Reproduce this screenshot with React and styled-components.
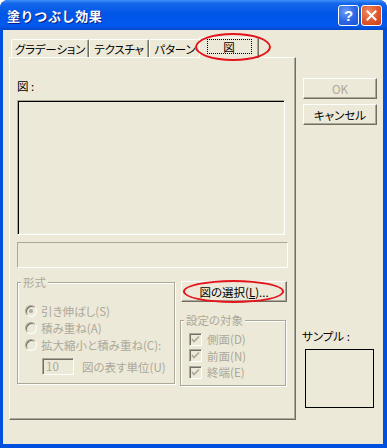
import styled, { createGlobalStyle } from "styled-components";

const GlobalStyle = createGlobalStyle`
  html, body {
    margin: 0;
    padding: 0;
    background: #ffffff;
  }
  body {
    font-family: "Noto Sans CJK JP", "Noto Sans", sans-serif;
    font-size: 11.5px;
    font-feature-settings: "palt";
  }
`;

const Window = styled.div`
  width: 387px;
  height: 448px;
  display: flex;
  flex-direction: column;
  background: #0050e0;
  border-radius: 8px 8px 0 0;
  overflow: hidden;
`;

const TitleBar = styled.div`
  height: 30px;
  flex: none;
  display: flex;
  align-items: center;
  padding: 0 5px 0 7px;
  box-sizing: border-box;
  background: linear-gradient(#3f8ff7 0%, #1466ea 12%, #0056e6 45%, #0058ee 85%, #0449cc 100%);
`;

const Title = styled.div`
  flex: 1;
  color: #ffffff;
  font-weight: bold;
  font-size: 13px;
  letter-spacing: 0.6px;
  font-feature-settings: normal;
  text-shadow: 1px 1px 0 #0a1e8a;
`;

const CaptionButton = styled.div`
  width: 21px;
  height: 21px;
  box-sizing: border-box;
  margin-left: 2px;
  border: 1px solid #ffffff;
  border-radius: 3px;
  display: flex;
  align-items: center;
  justify-content: center;
  color: #ffffff;
  font-family: "Liberation Sans", sans-serif;
  font-weight: bold;
  font-size: 15px;
  background: ${(p) =>
    p.$close
      ? "radial-gradient(circle at 35% 30%, #f08a64 0%, #e0562c 55%, #c7401a 100%)"
      : "radial-gradient(circle at 35% 30%, #6a9cf7 0%, #2a66e6 55%, #1a4fd0 100%)"};
`;

const Body = styled.div`
  flex: 1;
  margin: 0 4px 4px 3px;
  background: #ece9d8;
  display: flex;
  padding: 7px 0 0 6px;
`;

const LeftCol = styled.div`
  width: 287px;
  display: flex;
  flex-direction: column;
`;

const TabRow = styled.div`
  height: 20px;
  display: flex;
  align-items: flex-end;
  padding-left: 2px;
  position: relative;
  z-index: 1;
`;

const Tab = styled.div`
  position: relative;
  width: ${(p) => p.$w}px;
  height: ${(p) => (p.$active ? 21 : 18)}px;
  margin: ${(p) => (p.$active ? "0 -2px -1px -2px" : "0")};
  box-sizing: border-box;
  border: 1px solid #ffffff;
  border-right-color: #716f64;
  border-bottom: none;
  border-radius: 2px 2px 0 0;
  box-shadow: inset -1px 0 0 #aca899;
  background: #ece9d8;
  display: flex;
  align-items: center;
  justify-content: center;
  padding-bottom: ${(p) => (p.$active ? 3 : 0)}px;
  color: #000000;
  letter-spacing: -0.2px;
`;

const Focus = styled.span`
  display: flex;
  align-items: center;
  justify-content: center;
  width: 45px;
  height: 15px;
  outline: 1px dotted #000000;
  outline-offset: -1px;
`;

const Ring = styled.div`
  position: absolute;
  left: ${(p) => p.$l}px;
  top: ${(p) => p.$t}px;
  width: ${(p) => p.$w}px;
  height: ${(p) => p.$h}px;
  box-sizing: border-box;
  border: 2px solid #e3141c;
  border-radius: 50%;
  pointer-events: none;
`;

const Panel = styled.div`
  height: 363px;
  box-sizing: border-box;
  border: 1px solid #ffffff;
  border-right-color: #716f64;
  border-bottom-color: #716f64;
  box-shadow: inset -1px -1px 0 #aca899;
  padding: 21px 7px 0 7px;
  display: flex;
  flex-direction: column;
`;

const Label = styled.div`
  height: 14px;
  line-height: 14px;
  margin: ${(p) => p.$m || 0};
  color: ${(p) => (p.$disabled ? "#aca899" : "#000000")};
  white-space: nowrap;
`;

const PictureBox = styled.div`
  width: 268px;
  height: 135px;
  margin-top: 7px;
  box-sizing: border-box;
  border: 1px solid;
  border-color: #aca899 #ffffff #ffffff #aca899;
  box-shadow: inset 1px 1px 0 #000000, inset -1px -1px 0 #f1efe2;
`;

const NameBox = styled.div`
  width: 271px;
  height: 26px;
  margin-top: 7px;
  box-sizing: border-box;
  border: 1px solid;
  border-color: #aca899 #ffffff #ffffff #aca899;
`;

const LowerRow = styled.div`
  display: flex;
  margin-top: 7px;
  align-items: flex-start;
`;

const Group = styled.fieldset`
  margin: ${(p) => p.$mt || 0}px 0 0 0;
  padding: 0;
  width: ${(p) => p.$w}px;
  box-sizing: border-box;
  border: 1px solid #aca899;
  box-shadow: 1px 1px 0 #ffffff, inset 1px 1px 0 #ffffff;
  min-inline-size: 0;
`;

const Legend = styled.legend`
  margin-left: 3px;
  padding: 0 2px;
  line-height: 14px;
  height: 14px;
  color: #aca899;
  background: #ece9d8;
`;

const GroupContent = styled.div`
  padding: ${(p) => p.$pad};
  display: flex;
  flex-direction: column;
`;

const OptionRow = styled.div`
  height: ${(p) => p.$h || 17}px;
  display: flex;
  align-items: center;
  gap: ${(p) => p.$gap || 4}px;
  color: #aca899;
  white-space: nowrap;
`;

const Radio = styled.span`
  width: 12px;
  height: 12px;
  box-sizing: border-box;
  border-radius: 50%;
  border: 1px solid;
  border-color: #aca899 #ffffff #ffffff #aca899;
  box-shadow: inset 1px 1px 0 #716f64;
  background: #ece9d8;
  display: flex;
  align-items: center;
  justify-content: center;
  &::after {
    content: "";
    width: 4px;
    height: 4px;
    border-radius: 50%;
    background: ${(p) => (p.$checked ? "#aca899" : "transparent")};
  }
`;

const UnitRow = styled.div`
  display: flex;
  align-items: center;
  margin-top: 5px;
  padding-left: 17px;
  gap: 8px;
  color: #aca899;
  white-space: nowrap;
`;

const NumberBox = styled.div`
  width: 32px;
  height: 17px;
  box-sizing: border-box;
  border: 1px solid;
  border-color: #aca899 #ffffff #ffffff #aca899;
  box-shadow: inset 1px 1px 0 #716f64;
  color: #aca899;
  line-height: 15px;
  padding-left: 3px;
`;

const RightPart = styled.div`
  margin-left: 5px;
  width: 107px;
  display: flex;
  flex-direction: column;
`;

const Button = styled.div`
  position: relative;
  width: ${(p) => p.$w}px;
  height: ${(p) => p.$h || 21}px;
  margin: ${(p) => p.$m || 0};
  box-sizing: border-box;
  border: 1px solid;
  border-color: #ffffff #716f64 #716f64 #ffffff;
  box-shadow: inset -1px -1px 0 #aca899;
  background: #ece9d8;
  display: flex;
  align-items: center;
  justify-content: center;
  color: ${(p) => (p.$disabled ? "#aca899" : "#000000")};
  white-space: nowrap;
`;

const Check = styled.span`
  width: 13px;
  height: 13px;
  box-sizing: border-box;
  border: 1px solid;
  border-color: #aca899 #ffffff #ffffff #aca899;
  box-shadow: inset 1px 1px 0 #716f64;
  background: #ece9d8;
  display: flex;
  align-items: center;
  justify-content: center;
`;

const RightCol = styled.div`
  margin-left: 7px;
  width: 74px;
  display: flex;
  flex-direction: column;
`;

const SampleBox = styled.div`
  width: 69px;
  height: 59px;
  margin: 6px 0 0 2px;
  box-sizing: border-box;
  border: 1px solid #000000;
`;

const CheckMark = () => (
  <svg width="9" height="9" viewBox="0 0 9 9">
    <polyline points="1,4 3,6.5 8,1.5" fill="none" stroke="#aca899" strokeWidth="1.6" />
  </svg>
);

const CloseGlyph = () => (
  <svg width="11" height="11" viewBox="0 0 11 11">
    <path d="M1.5 1.5 L9.5 9.5 M9.5 1.5 L1.5 9.5" stroke="#ffffff" strokeWidth="2" strokeLinecap="square" />
  </svg>
);

export default function App() {
  return (
    <>
      <GlobalStyle />
      <Window>
        <TitleBar>
          <Title>塗りつぶし効果</Title>
          <CaptionButton>?</CaptionButton>
          <CaptionButton $close>
            <CloseGlyph />
          </CaptionButton>
        </TitleBar>
        <Body>
          <LeftCol>
            <TabRow>
              <Tab $w={78}>グラデーション</Tab>
              <Tab $w={60}>テクスチャ</Tab>
              <Tab $w={52}>パターン</Tab>
              <Tab $w={60} $active>
                <Focus>図</Focus>
                <Ring $l={-5} $t={-5} $w={76} $h={28} />
              </Tab>
            </TabRow>
            <Panel>
              <Label>図 :</Label>
              <PictureBox />
              <NameBox />
              <LowerRow>
                <Group $w={158}>
                  <Legend>形式</Legend>
                  <GroupContent $pad="13px 0 8px 7px">
                    <OptionRow>
                      <Radio $checked />
                      引き伸ばし(S)
                    </OptionRow>
                    <OptionRow>
                      <Radio />
                      積み重ね(A)
                    </OptionRow>
                    <OptionRow>
                      <Radio />
                      拡大縮小と積み重ね(C):
                    </OptionRow>
                    <UnitRow>
                      <NumberBox>10</NumberBox>
                      図の表す単位(U)
                    </UnitRow>
                  </GroupContent>
                </Group>
                <RightPart>
                  <Button $w={106} $m="6px 0 0 1px">
                    図の選択(<u>L</u>)...
                    <Ring $l={1} $t={-2} $w={101} $h={23} />
                  </Button>
                  <Group $w={106} $mt={11}>
                    <Legend>設定の対象</Legend>
                    <GroupContent $pad="4px 0 4px 8px">
                      <OptionRow $gap={5} $h={16.5}>
                        <Check>
                          <CheckMark />
                        </Check>
                        側面(D)
                      </OptionRow>
                      <OptionRow $gap={5} $h={16.5}>
                        <Check>
                          <CheckMark />
                        </Check>
                        前面(N)
                      </OptionRow>
                      <OptionRow $gap={5} $h={16.5}>
                        <Check>
                          <CheckMark />
                        </Check>
                        終端(E)
                      </OptionRow>
                    </GroupContent>
                  </Group>
                </RightPart>
              </LowerRow>
            </Panel>
          </LeftCol>
          <RightCol>
            <Button $w={74} $m="41px 0 0 0" $disabled>
              OK
            </Button>
            <Button $w={74} $m="5px 0 0 0">
              キャンセル
            </Button>
            <Label $m="204px 0 0 -1px">サンプル :</Label>
            <SampleBox />
          </RightCol>
        </Body>
      </Window>
    </>
  );
}
